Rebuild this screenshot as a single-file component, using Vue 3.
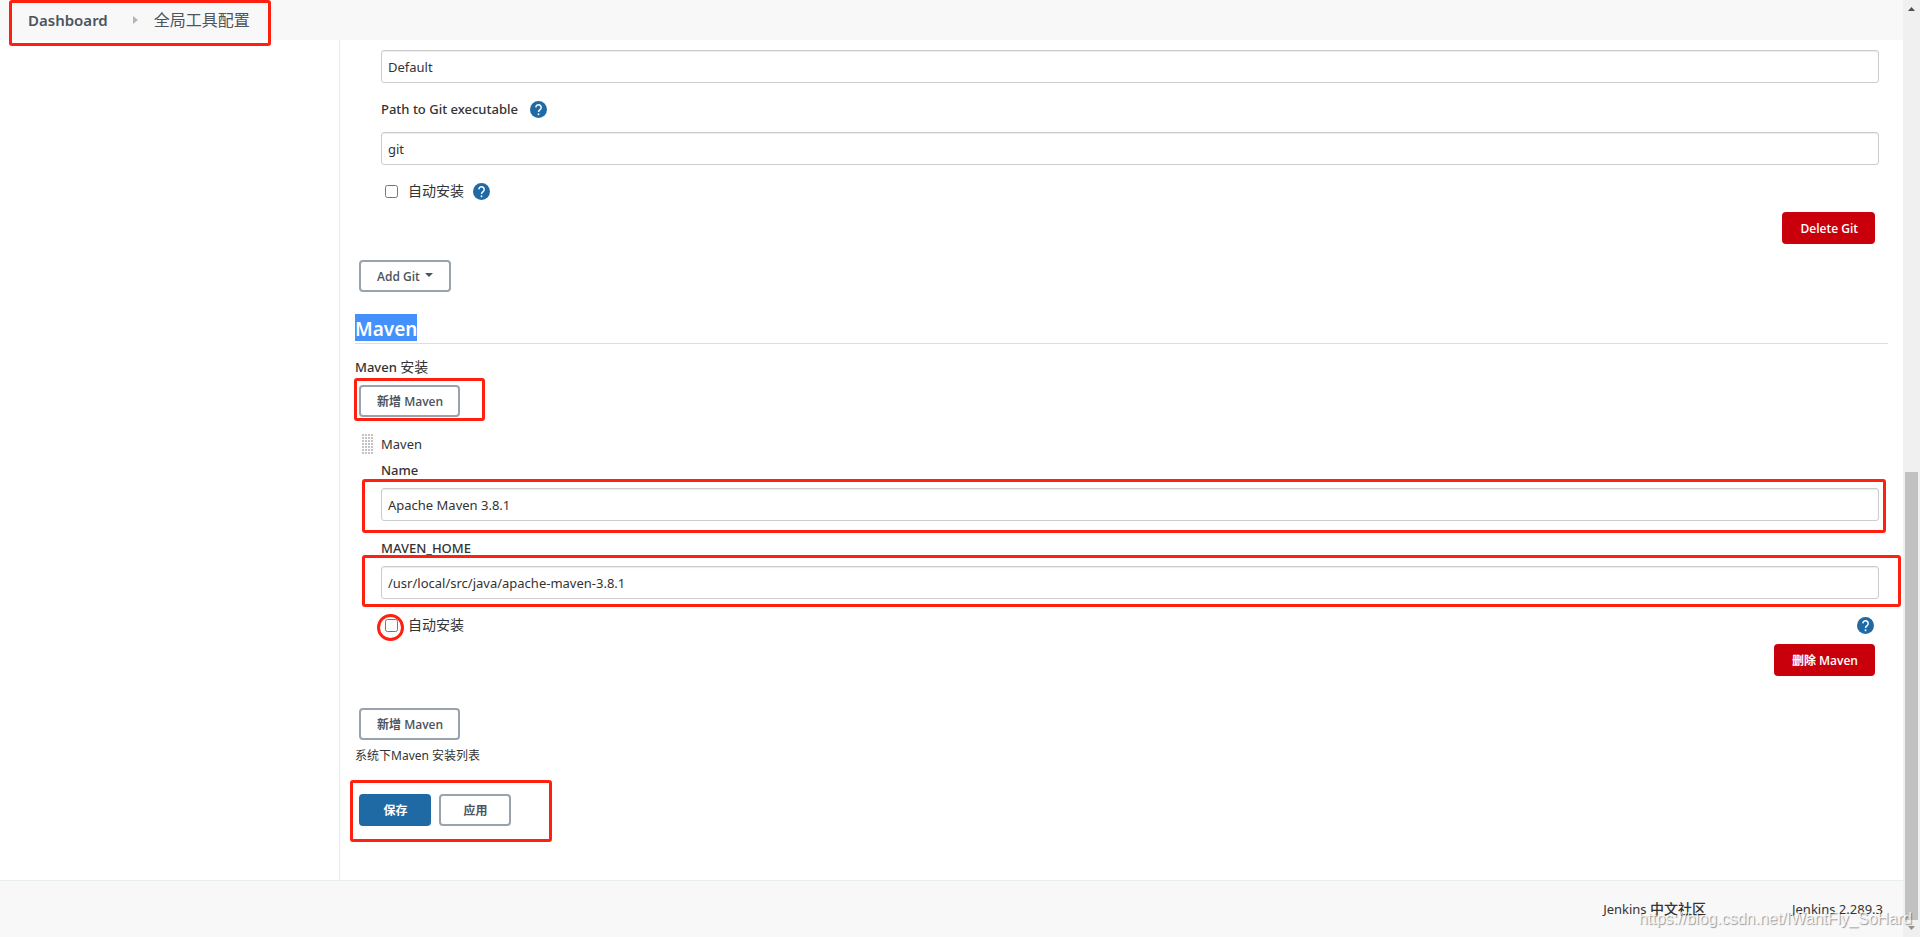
<script setup>
import { ref } from 'vue'

const gitName = ref('Default')
const gitPath = ref('git')
const gitAuto = ref(false)
const mavenName = ref('Apache Maven 3.8.1')
const mavenHome = ref('/usr/local/src/java/apache-maven-3.8.1')
const mavenAuto = ref(false)
</script>

<template>
  <div class="page">
    <div class="view">
      <nav class="crumbs">
        <div class="crumb-list">
          <a class="crumb" href="#">Dashboard</a>
          <svg class="crumb-arrow" width="5" height="8" viewBox="0 0 5 8"><path d="M0 0L5 4L0 8Z" fill="#b5b5b5" /></svg>
          <a class="crumb cjk16" href="#">全局工具配置</a>
          <span class="mark mark-crumbs"></span>
        </div>
      </nav>

      <div class="columns">
        <aside class="side"></aside>
        <main class="main">
          <section class="tool">
            <input v-model="gitName" class="field" type="text" aria-label="Git name" />
            <div class="label-row git-label">
              <label class="label" for="git-path">Path to Git executable</label>
              <button class="help" type="button" aria-label="Help">
                <svg viewBox="0 0 24 24"><circle cx="12" cy="12" r="12" fill="#1f6aa5" /><path d="M8.200 9a3.800 3.800 0 1 1 6.200 3c-1.500 1.200-2.400 1.800-2.400 3.600" fill="none" stroke="#fff" stroke-width="2" /><rect x="10.900" y="17.500" width="2.200" height="2.500" fill="#fff" /></svg>
              </button>
            </div>
            <input id="git-path" v-model="gitPath" class="field" type="text" />
            <div class="check-row">
              <input id="git-auto" v-model="gitAuto" class="check" type="checkbox" />
              <label class="cjk" for="git-auto">自动安装</label>
              <button class="help" type="button" aria-label="Help">
                <svg viewBox="0 0 24 24"><circle cx="12" cy="12" r="12" fill="#1f6aa5" /><path d="M8.200 9a3.800 3.800 0 1 1 6.200 3c-1.500 1.200-2.400 1.800-2.400 3.600" fill="none" stroke="#fff" stroke-width="2" /><rect x="10.900" y="17.500" width="2.200" height="2.500" fill="#fff" /></svg>
              </button>
            </div>
            <div class="remove-row">
              <button class="btn danger" type="button">Delete Git</button>
            </div>
          </section>

          <div class="add-row git-add">
            <button class="btn" type="button">Add Git<span class="caret"></span></button>
          </div>

          <h2 class="heading"><span class="selected">Maven</span></h2>

          <div class="label install">Maven <span class="cjk">安装</span></div>
          <div class="add-row">
            <button class="btn" type="button"><span class="cjk12">新增</span> Maven</button>
            <span class="mark mark-add"></span>
          </div>

          <section class="tool maven">
            <div class="drag-row">
              <svg class="grip" width="11" height="20" viewBox="0 0 11 20">
                <defs>
                  <pattern id="grip-dots" width="3" height="3" patternUnits="userSpaceOnUse"><rect width="2" height="2" fill="#c4c4c4" /></pattern>
                </defs>
                <rect width="11" height="20" fill="url(#grip-dots)" />
              </svg>
              <span>Maven</span>
            </div>
            <div class="label-row name-label"><label class="label" for="maven-name">Name</label></div>
            <div class="boxed">
              <input id="maven-name" v-model="mavenName" class="field" type="text" />
              <span class="mark mark-name"></span>
            </div>
            <div class="label-row home-label"><label class="label" for="maven-home">MAVEN_HOME</label></div>
            <div class="boxed">
              <input id="maven-home" v-model="mavenHome" class="field" type="text" />
              <span class="mark mark-home"></span>
            </div>
            <div class="check-row">
              <input id="maven-auto" v-model="mavenAuto" class="check" type="checkbox" />
              <label class="cjk" for="maven-auto">自动安装</label>
              <button class="help far" type="button" aria-label="Help">
                <svg viewBox="0 0 24 24"><circle cx="12" cy="12" r="12" fill="#1f6aa5" /><path d="M8.200 9a3.800 3.800 0 1 1 6.200 3c-1.500 1.200-2.400 1.800-2.400 3.600" fill="none" stroke="#fff" stroke-width="2" /><rect x="10.900" y="17.500" width="2.200" height="2.500" fill="#fff" /></svg>
              </button>
              <span class="mark mark-check"></span>
            </div>
            <div class="remove-row">
              <button class="btn danger" type="button"><span class="cjk12">删除</span> Maven</button>
            </div>
          </section>

          <div class="add-row again">
            <button class="btn" type="button"><span class="cjk12">新增</span> Maven</button>
          </div>
          <p class="hint"><span class="cjk12">系统下</span>Maven <span class="cjk12">安装列表</span></p>

          <div class="actions">
            <button class="btn wide primary cjk12" type="button">保存</button>
            <button class="btn wide cjk12" type="button">应用</button>
            <span class="mark mark-actions"></span>
          </div>
        </main>
      </div>

      <footer class="footer">
        <a href="#">Jenkins <span class="cjk strong">中文社区</span></a>
        <a href="#">Jenkins 2.289.3</a>
      </footer>
    </div>

    <div class="scrollbar">
      <svg width="7" height="4" viewBox="0 0 7 4"><path d="M0 4L3.500 0L7 4Z" fill="#505050" /></svg>
      <div class="thumb"></div>
      <svg width="7" height="4" viewBox="0 0 7 4"><path d="M0 0L3.500 4L7 0Z" fill="#909090" /></svg>
    </div>
    <div class="watermark">https://blog.csdn.net/IWantFly_SoHard</div>
  </div>
</template>

<style>
body {
  margin: 0;
  background: #fff;
}
</style>

<style scoped>
.page {
  position: relative;
  display: flex;
  min-height: 100vh;
  color: #333;
  font: 13px/20px "Noto Sans", "Noto Sans CJK SC", sans-serif;
}
.page * {
  box-sizing: border-box;
}
.view {
  flex: 1;
  min-width: 0;
  display: flex;
  flex-direction: column;
}
a {
  color: inherit;
  text-decoration: none;
}
.cjk {
  font-size: 14px;
  font-weight: 400;
}
.cjk12 {
  font-size: 12px;
}
.crumbs {
  display: flex;
  height: 40px;
  background: #f8f8f8;
}
.crumb-list {
  position: relative;
  display: flex;
  align-items: center;
  padding-left: 28px;
}
.crumb {
  color: #4d545d;
  font-size: 15px;
  font-weight: 600;
}
.crumb.cjk16 {
  font-size: 16px;
  font-weight: 400;
}
.crumb-arrow {
  margin: 0 16px 0 25px;
}
.columns {
  flex: 1;
  display: flex;
}
.side {
  width: 340px;
  border-right: 1px solid #eaeaea;
}
.main {
  flex: 1;
  min-width: 0;
  padding: 10px 15px 54px;
}
.tool {
  padding: 0 9px 0 26px;
}
.field {
  display: block;
  width: 100%;
  height: 33px;
  padding: 0 6px;
  border: 1px solid #ccc;
  border-radius: 3px;
  background: #fff;
  box-shadow: inset 0 1px 1px rgba(0, 0, 0, 0.08);
  color: #333;
  font: inherit;
  outline: none;
}
.label-row,
.check-row,
.drag-row {
  display: flex;
  align-items: center;
  height: 20px;
}
.label {
  font-weight: 500;
}
.git-label {
  gap: 3px;
  margin: 16px 0 13px;
}
.help {
  width: 17px;
  height: 17px;
  margin-left: 9px;
  padding: 0;
  border: 0;
  background: none;
}
.help svg {
  display: block;
  width: 17px;
  height: 17px;
}
.far {
  margin: 0 5px 0 auto;
}
.check-row {
  position: relative;
  margin-top: 16px;
}
.check {
  width: 13px;
  height: 13px;
  margin: 0 10px 0 4px;
}
.remove-row {
  display: flex;
  justify-content: flex-end;
  margin-top: 11px;
  padding-right: 4px;
}
.maven .remove-row {
  margin-top: 9px;
}
.btn {
  display: inline-flex;
  align-items: center;
  justify-content: center;
  height: 32px;
  padding: 2px 15px 0 16px;
  border: 2px solid #98a3ad;
  border-radius: 4px;
  background: #fff;
  color: #4d545d;
  font: 600 12px/16px "Open Sans", "Noto Sans CJK SC", sans-serif;
  white-space: pre;
}
.danger {
  border-color: #c9000b;
  background: #c9000b;
  color: #fff;
}
.primary {
  border-color: #1f6aa5;
  background: #1f6aa5;
  color: #fff;
}
.wide {
  width: 72px;
}
.caret {
  margin: 0 1px 4px 5px;
  border: 4px solid transparent;
  border-top-color: #4d545d;
  border-bottom: 0;
}
.add-row {
  position: relative;
  display: flex;
  margin-top: 8px;
  padding-left: 4px;
}
.git-add {
  margin-top: 16px;
}
.heading {
  display: flex;
  margin: 22px 0 13px;
  padding-bottom: 2px;
  border-bottom: 1px solid #ddd;
  font-size: 19px;
  font-weight: 600;
  line-height: 24px;
}
.selected {
  padding-top: 3px;
  background: #4490ff;
  color: #fff;
}
.maven {
  margin-top: 17px;
}
.grip {
  margin: 0 8px 0 -19px;
}
.name-label {
  margin: 6px 0 8px;
}
.home-label {
  margin: 17px 0 8px;
}
.boxed {
  position: relative;
}
.again {
  margin-top: 32px;
}
.hint {
  margin: 6px 0 0;
  font-size: 12px;
}
.actions {
  position: relative;
  display: flex;
  gap: 8px;
  margin-top: 28px;
  padding-left: 4px;
}
.footer {
  display: flex;
  justify-content: flex-end;
  gap: 86px;
  padding: 18px 20px 18px 0;
  border-top: 1px solid #e8eeee;
  background: #f8f8f8;
}
.footer .strong {
  font-weight: 500;
}
.mark {
  position: absolute;
  border: 3px solid #ff2010;
  border-radius: 3px;
  pointer-events: none;
}
.mark-crumbs {
  inset: 0 -21px -6px 9px;
}
.mark-add {
  top: -7px;
  left: -1px;
  width: 131px;
  height: 43px;
}
.mark-name {
  inset: -9px -7px -12px -19px;
}
.mark-home {
  inset: -11px -22px -8px -19px;
}
.mark-check {
  top: -1px;
  left: -4px;
  width: 27px;
  height: 27px;
  border-radius: 50%;
}
.mark-actions {
  top: -14px;
  left: -5px;
  width: 202px;
  height: 62px;
}
.scrollbar {
  display: flex;
  flex-direction: column;
  align-items: center;
  width: 17px;
  padding: 7px 0;
  background: #f0f0f0;
}
.thumb {
  width: 13px;
  height: 448px;
  margin: auto 0 6px;
  background: #c1c1c1;
}
.watermark {
  position: absolute;
  right: 8px;
  bottom: 8px;
  color: rgba(255, 255, 255, 0.8);
  font: 16px/20px "Liberation Sans", sans-serif;
  text-shadow: 1px 1px 1px rgba(0, 0, 0, 0.4);
  pointer-events: none;
}
</style>
